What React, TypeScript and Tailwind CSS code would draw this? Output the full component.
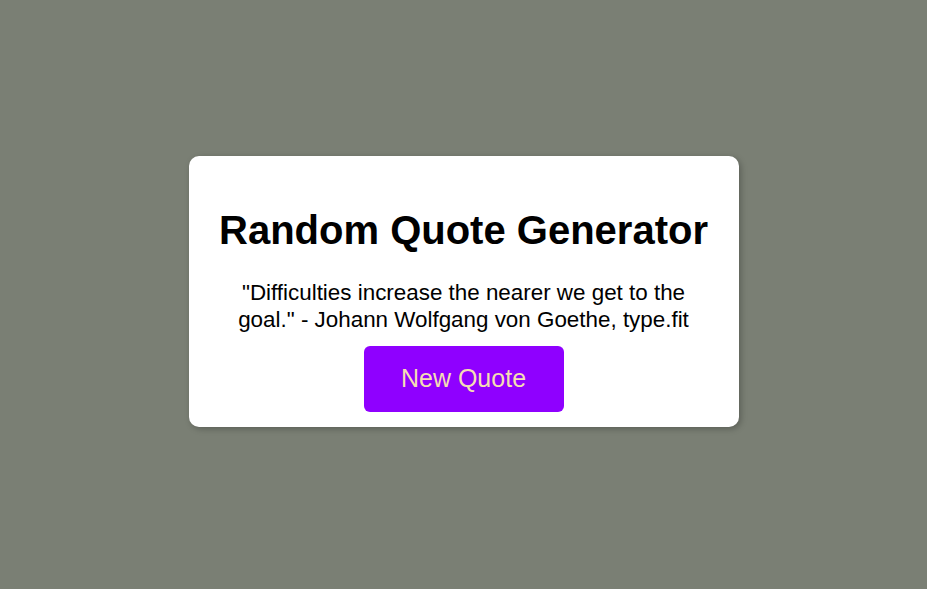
import React, { useState } from 'react';

const QUOTES = [
  { text: 'Difficulties increase the nearer we get to the goal.', author: 'Johann Wolfgang von Goethe, type.fit' },
  { text: 'Well begun is half done.', author: 'Aristotle, type.fit' },
];

const App: React.FC = () => {
  const [idx, setIdx] = useState(0);
  const q = QUOTES[idx];

  return (
    <div className="min-h-screen w-full bg-[#7a7f74] flex items-center justify-center font-['Liberation_Sans',Arial,sans-serif]">
      {/* Card */}
      <div className="w-[550px] bg-white rounded-[10px] px-[25px] pt-[24px] pb-[15px] text-center shadow-[2px_2px_6px_rgba(0,0,0,0.25)] mb-[6px]">
        <h1 className="text-[40px] font-bold text-black my-[27px] leading-[46px]">Random Quote Generator</h1>
        <p className="text-[22.4px] leading-[26.5px] text-black">
          "{q.text}" - {q.author}
        </p>
        <button
          onClick={() => setIdx((idx + 1) % QUOTES.length)}
          className="mt-[13px] w-[200px] h-[66px] rounded-[6px] bg-[#8f00ff] text-[#f5deb3] text-[25px] cursor-pointer"
        >
          New Quote
        </button>
      </div>
    </div>
  );
};

export default App;
